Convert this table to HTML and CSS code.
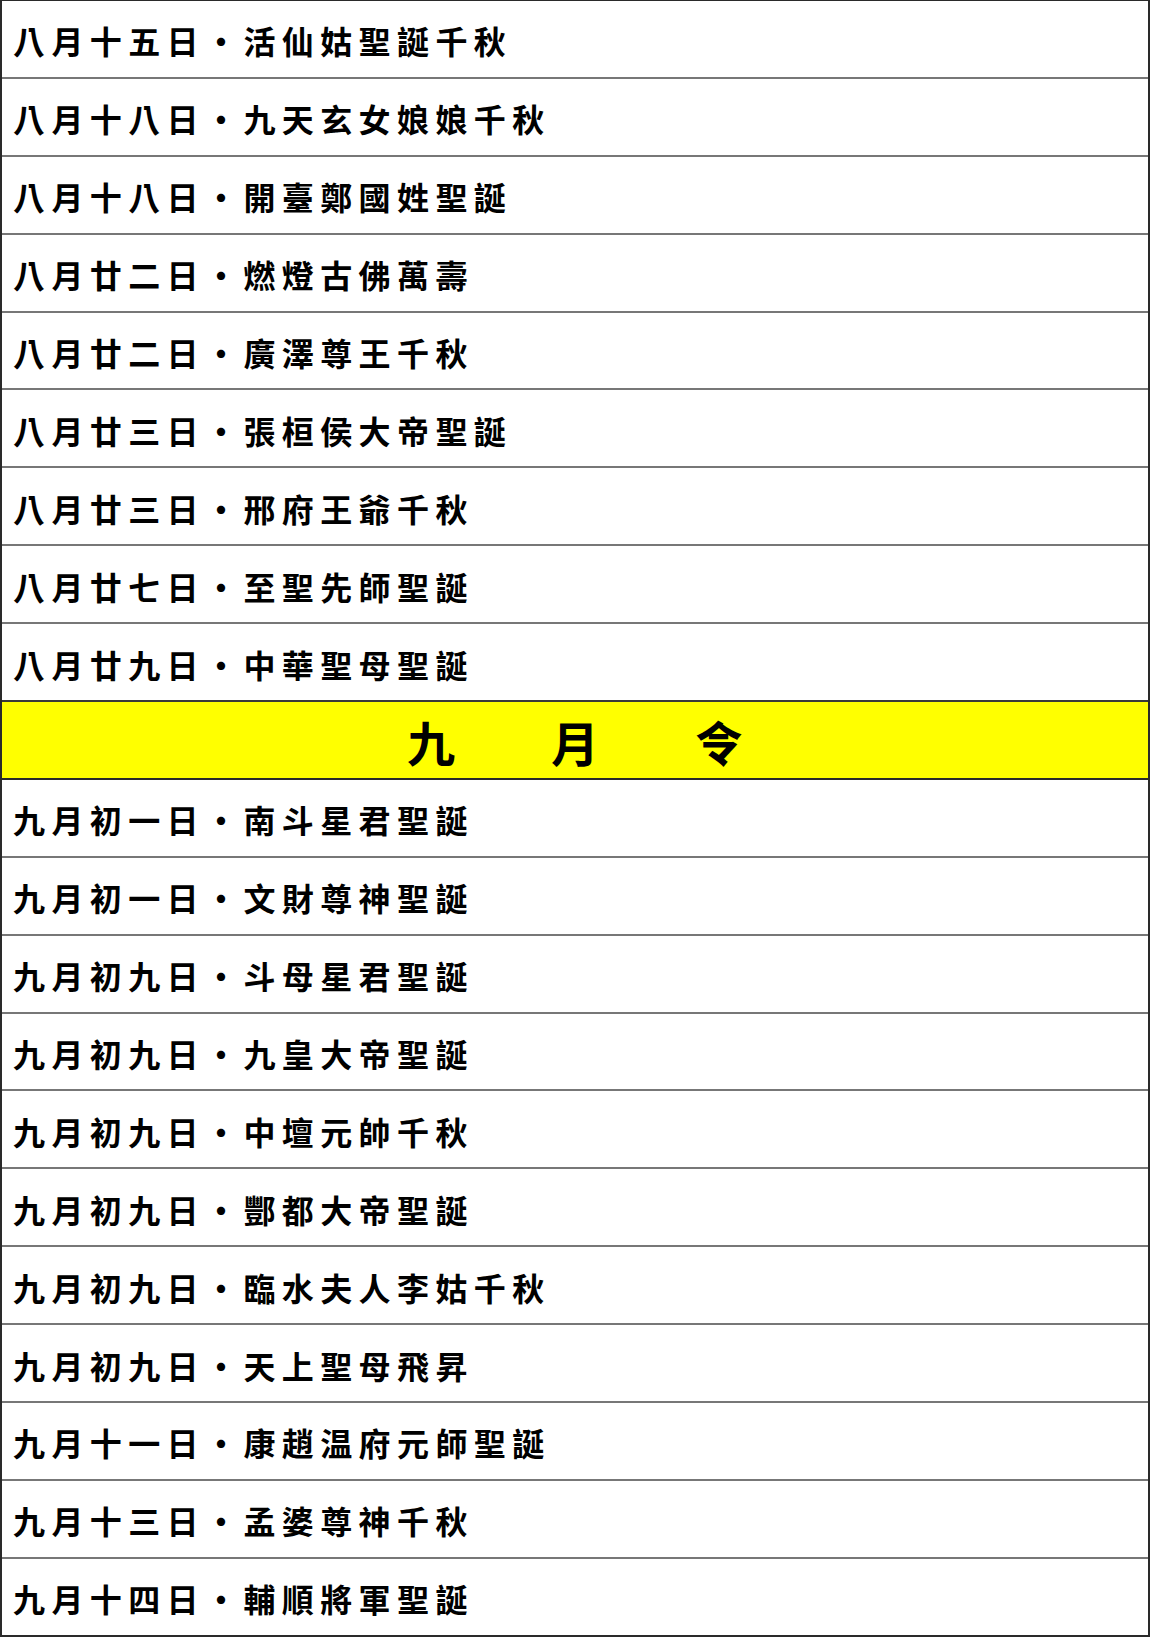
FILE: index.html
```html
<!DOCTYPE html>
<html lang="zh-Hant">
<head>
<meta charset="utf-8">
<title>八月・九月令</title>
<link rel="stylesheet" href="styles.css">
</head>
<body>
<div class="table">
  <div class="row">八月十五日・活仙姑聖誕千秋</div>
  <div class="row">八月十八日・九天玄女娘娘千秋</div>
  <div class="row">八月十八日・開臺鄭國姓聖誕</div>
  <div class="row">八月廿二日・燃燈古佛萬壽</div>
  <div class="row">八月廿二日・廣澤尊王千秋</div>
  <div class="row">八月廿三日・張桓侯大帝聖誕</div>
  <div class="row">八月廿三日・邢府王爺千秋</div>
  <div class="row">八月廿七日・至聖先師聖誕</div>
  <div class="row">八月廿九日・中華聖母聖誕</div>
  <div class="row month">九　　月　　令</div>
  <div class="row">九月初一日・南斗星君聖誕</div>
  <div class="row">九月初一日・文財尊神聖誕</div>
  <div class="row">九月初九日・斗母星君聖誕</div>
  <div class="row">九月初九日・九皇大帝聖誕</div>
  <div class="row">九月初九日・中壇元帥千秋</div>
  <div class="row">九月初九日・酆都大帝聖誕</div>
  <div class="row">九月初九日・臨水夫人李姑千秋</div>
  <div class="row">九月初九日・天上聖母飛昇</div>
  <div class="row">九月十一日・康趙温府元師聖誕</div>
  <div class="row">九月十三日・孟婆尊神千秋</div>
  <div class="row">九月十四日・輔順將軍聖誕</div>
</div>
</body>
</html>
```
FILE: styles.css
```css
html, body {
  margin: 0;
  padding: 0;
  background: #ffffff;
}
.table {
  width: 1150px;
  box-sizing: border-box;
  border-top: 1px solid #2a2a2a;
  border-left: 2px solid #2a2a2a;
  border-right: 2px solid #2a2a2a;
  display: flex;
  flex-direction: column;
  font-family: "Noto Sans CJK TC", "Noto Sans CJK SC", sans-serif;
  color: #000;
}
.row {
  height: 77.9px;
  box-sizing: border-box;
  border-bottom: 2px solid #777777;
  display: flex;
  align-items: center;
  padding-left: 11px;
  padding-top: 3px;
  font-size: 32px;
  font-weight: 700;
  letter-spacing: 6.4px;
  white-space: pre;
}
.row:last-child {
  border-bottom: 2px solid #2a2a2a;
}
.row:nth-child(9) {
  border-bottom: 2px solid #3a3a3a;
}
.month {
  background: #ffff00;
  justify-content: center;
  padding-left: 0;
  font-size: 48px;
  letter-spacing: 0;
  border-bottom: 2px solid #2a2a2a;
}
```
